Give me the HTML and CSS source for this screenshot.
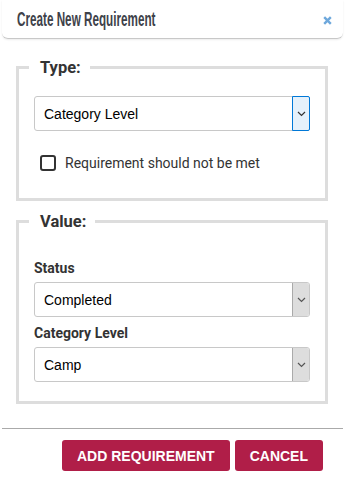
FILE: index.html
```html
<!DOCTYPE html>
<html lang="en">

<head>
    <meta charset="UTF-8" />
    <meta name="viewport" content="width=device-width, initial-scale=1.0" />
    <title>Create New Requirement</title>
    <link rel="stylesheet" href="styles.css">
</head>

<body class="page">
    <div class="dialog">
        <header class="dlg-head">
            <h2 class="dlg-title">Create New Requirement</h2>
            <span class="dlg-close">
                <svg width="9" height="9" viewBox="0 0 9 9"><path d="M1.2 1.2 L7.8 7.8 M7.8 1.2 L1.2 7.8" stroke="rgb(110, 168, 220)" stroke-width="2.4" /></svg>
            </span>
        </header>

        <main class="dlg-body">
            <fieldset class="box">
                <legend class="box-legend">Type:</legend>
                <div class="sel sel-focus">
                    <span class="sel-text">Category Level</span>
                    <span class="sel-arrow">
                        <svg width="9" height="6" viewBox="0 0 9 6"><path d="M1 1 L4.5 4.5 L8 1" fill="none" stroke="#333" stroke-width="1.2" /></svg>
                    </span>
                </div>
                <label class="chk-row">
                    <span class="chk"></span>
                    <span class="chk-text">Requirement should not be met</span>
                </label>
            </fieldset>

            <fieldset class="box box-value">
                <legend class="box-legend">Value:</legend>
                <div class="fld-label">Status</div>
                <div class="sel">
                    <span class="sel-text">Completed</span>
                    <span class="sel-arrow">
                        <svg width="9" height="6" viewBox="0 0 9 6"><path d="M1 1 L4.5 4.5 L8 1" fill="none" stroke="#555" stroke-width="1.2" /></svg>
                    </span>
                </div>
                <div class="fld-label">Category Level</div>
                <div class="sel">
                    <span class="sel-text">Camp</span>
                    <span class="sel-arrow">
                        <svg width="9" height="6" viewBox="0 0 9 6"><path d="M1 1 L4.5 4.5 L8 1" fill="none" stroke="#555" stroke-width="1.2" /></svg>
                    </span>
                </div>
            </fieldset>
        </main>

        <footer class="dlg-foot">
            <button class="btn">ADD REQUIREMENT</button>
            <button class="btn">CANCEL</button>
        </footer>
    </div>
</body>

</html>
```

FILE: styles.css
```css
.page {
    margin: 0;
    background-color: rgb(255, 255, 255);
    font-family: "Liberation Sans", Arial, sans-serif;
}

.dialog {
    width: 345px;
}

.dlg-head {
    margin: 0 2px;
    height: 38px;
    padding: 0 11px 0 15px;
    display: flex;
    align-items: center;
    justify-content: space-between;
    border-bottom: 1px solid rgb(200, 200, 200);
    border-radius: 0 0 6px 6px;
    box-shadow: 0 1px 2px rgba(0, 0, 0, 0.08);
}

.dlg-title {
    margin: 0;
    font-family: "Liberation Sans", Arial, sans-serif;
    font-size: 19.5px;
    font-weight: 700;
    color: rgb(62, 66, 74);
    transform: scaleX(0.6);
    transform-origin: left center;
    white-space: nowrap;
}

.dlg-close {
    display: flex;
    margin-top: 2px;
}

.dlg-body {
    padding: 19px 16px 0 16px;
}

.box {
    margin: 0 1px 0 0;
    padding: 19px 15px 27px 15px;
    border: 3px solid rgb(221, 221, 221);
    min-width: 0;
}

.box-value {
    margin-top: 11px;
    padding-top: 21px;
    padding-bottom: 19px;
}

.box-legend {
    margin-left: -5px;
    padding: 0 9px 0 11px;
    font-family: Roboto, "Liberation Sans", sans-serif;
    font-size: 16.5px;
    font-weight: 700;
    color: rgb(51, 51, 51);
}

.sel {
    height: 35px;
    box-sizing: border-box;
    display: flex;
    align-items: stretch;
    border: 1px solid rgb(200, 200, 200);
    border-radius: 3px;
    background-color: rgb(255, 255, 255);
}

.sel-text {
    flex: 1;
    display: flex;
    align-items: center;
    padding-left: 9px;
    font-size: 14px;
    color: rgb(0, 0, 0);
}

.sel-arrow {
    width: 16px;
    display: flex;
    align-items: center;
    justify-content: center;
    background-color: rgb(221, 221, 221);
    border-left: 1px solid rgb(170, 170, 170);
    border-radius: 0 2px 2px 0;
}

.sel-focus .sel-arrow {
    background-color: rgb(229, 241, 251);
    border: 1px solid rgb(0, 120, 215);
    margin: -1px;
    width: 16px;
}

.chk-row {
    margin-top: 24px;
    display: flex;
    align-items: center;
    padding-left: 6px;
}

.chk {
    width: 12px;
    height: 12px;
    border: 2px solid rgb(51, 51, 51);
    border-radius: 3px;
    margin-right: 9px;
}

.chk-text {
    font-family: Roboto, "Liberation Sans", sans-serif;
    font-size: 14px;
    color: rgb(51, 51, 51);
}

.fld-label {
    margin-top: 8px;
    margin-bottom: 6px;
    font-family: Roboto, "Liberation Sans", sans-serif;
    font-size: 14px;
    font-weight: 700;
    color: rgb(51, 51, 51);
}

.box-value .fld-label:first-child {
    margin-top: 0;
}

.dlg-foot {
    margin: 24px 2px 0 2px;
    border-top: 1px solid rgb(170, 170, 170);
    padding: 11px 20px 0 0;
    display: flex;
    justify-content: flex-end;
    gap: 5px;
}

.btn {
    height: 31px;
    padding: 0 15px;
    border: 0;
    border-radius: 3px;
    background-color: rgb(176, 30, 72);
    color: rgb(255, 255, 255);
    font-family: "Liberation Sans", Arial, sans-serif;
    font-size: 14px;
    font-weight: 700;
}
```
